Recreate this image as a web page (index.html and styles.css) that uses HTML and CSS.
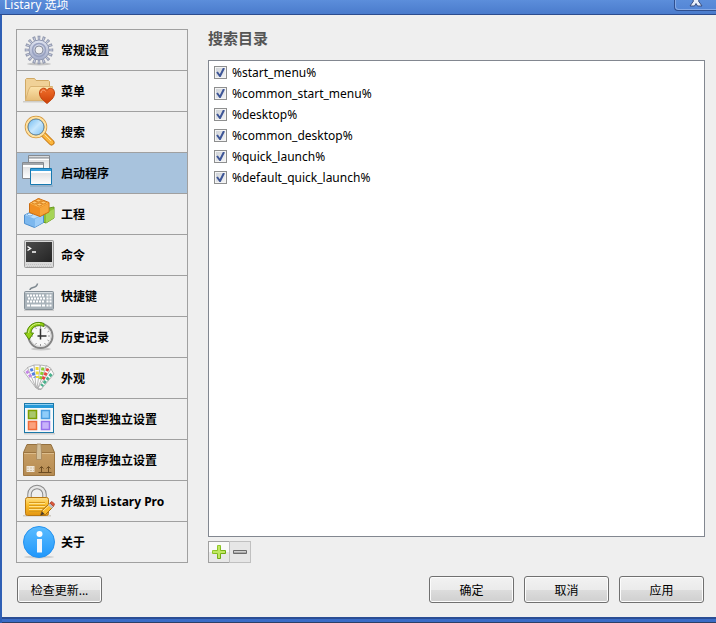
FILE: index.html
```html
<!DOCTYPE html>
<html lang="zh-CN">
<head>
  <meta charset="UTF-8">
  <title>Listary 选项</title>
  <link rel="stylesheet" href="styles.css">
</head>
<body>

  <header class="titlebar">
    <span class="title">Listary 选项</span>
    <button class="close-btn" aria-label="关闭">
      <svg width="14" height="12" viewBox="0 0 14 12">
        <path d="M1 0h4l2 3 2-3h4L9.500 6l3.500 5H8.500L7 8.500 5.500 11H1l3.500-5z" fill="#e8effa" stroke="#3a4f80"/>
      </svg>
    </button>
  </header>

  <main class="window">
    <div class="columns">
      <nav class="sidebar">
        <button class="nav-item">
          <svg class="icon" viewBox="0 0 32 32">
            <defs>
              <linearGradient id="gGear" x1="0" y1="0" x2="0" y2="1"><stop offset="0" stop-color="#dfe3f0"/><stop offset="1" stop-color="#a3acc9"/></linearGradient>
            </defs>
            <ellipse cx="16" cy="30" rx="12" ry="1.500" fill="#c4c4c4"/>
            <circle cx="16" cy="16" r="12" fill="none" stroke="#858ca3" stroke-width="4.500" pathLength="32" stroke-dasharray="1.100 .9" stroke-dashoffset=".55"/>
            <circle cx="16" cy="16" r="11.500" fill="none" stroke="#c3c9dc" stroke-width="4" pathLength="32" stroke-dasharray=".5 1.500" stroke-dashoffset=".25"/>
            <circle cx="16" cy="16" r="10" fill="url(#gGear)" stroke="#8f97b0"/>
            <circle cx="16" cy="16" r="6.500" fill="none" stroke="#98a1c0" stroke-width="1.500"/>
            <circle cx="16" cy="16" r="4" fill="#efefef" stroke="#8a8f9f"/>
          </svg>
          常规设置
        </button>
        <button class="nav-item">
          <svg class="icon" viewBox="0 0 32 32">
            <defs>
              <linearGradient id="gFolder" x1="0" y1="0" x2="0" y2="1"><stop offset="0" stop-color="#fce3ab"/><stop offset="1" stop-color="#e6bd78"/></linearGradient>
              <linearGradient id="gHeart" x1="0" y1="0" x2="0" y2="1"><stop offset="0" stop-color="#f0702c"/><stop offset="1" stop-color="#cc3f06"/></linearGradient>
            </defs>
            <path d="M0 26h24v1.500H0z" fill="#cfcdc8"/>
            <path d="M2.500 25.500v-21l1-1h8l1.500 2h12.500l1 1v19z" fill="#f0d197" stroke="#d0a965"/>
            <path d="M2.500 25.500L5.500 15l2-3.500h22L27 25.500z" fill="url(#gFolder)" stroke="#d9b372"/>
            <path d="M24 28.500c-3-2.500-7.500-5.500-7.500-10.500 0-5 5.500-6.500 7.500-2.500 2-4 7.500-2.500 7.500 2.500 0 5-4.500 8-7.500 10.500z" fill="url(#gHeart)" stroke="#c0420d"/>
            <path d="M18 18c0-3.500 3.500-3.500 4.500-1.500" fill="none" stroke="#f9a87a"/>
          </svg>
          菜单
        </button>
        <button class="nav-item">
          <svg class="icon" viewBox="0 0 32 32">
            <defs>
              <linearGradient id="gLens" x1="0" y1="0" x2="1" y2="1"><stop offset="0" stop-color="#5fb2f0"/><stop offset=".5" stop-color="#c7e7fd"/><stop offset="1" stop-color="#6fbaf2"/></linearGradient>
            </defs>
            <path d="M20 18l8.500 8.500" stroke="#c67a16" stroke-width="6" stroke-linecap="round"/>
            <path d="M20.500 18.500l8 8" stroke="#fbb53c" stroke-width="4" stroke-linecap="round"/>
            <path d="M21 18l7 7" stroke="#fde09a" stroke-width="1"/>
            <circle cx="13" cy="11" r="9.500" fill="url(#gLens)" stroke="#d3973b" stroke-width="3.500"/>
            <circle cx="13" cy="11" r="9.500" fill="none" stroke="#ffe2a3" stroke-width="2"/>
            <circle cx="13" cy="11" r="8" fill="none" stroke="#628eaf"/>
          </svg>
          搜索
        </button>
        <button class="nav-item active">
          <svg class="icon" viewBox="0 0 32 32">
            <defs>
              <linearGradient id="gWin" x1="0" y1="0" x2="0" y2="1"><stop offset="0" stop-color="#d5d7d9"/><stop offset="1" stop-color="#ffffff"/></linearGradient>
            </defs>
            <path d="M5.500-1.500h21v17h-21z" fill="url(#gWin)" stroke="#858a90"/>
            <path d="M6 0h20v1.500H6z" fill="#a3a7ab"/><path d="M6 2h20v1H6z" fill="#fff"/>
            <path d="M-.5 5.500h21v16h-21z" fill="url(#gWin)" stroke="#858a90"/>
            <path d="M0 6h20v2H0z" fill="#a3a7ab"/><path d="M0 8h20v2H0z" fill="#fff"/>
            <path d="M7 28.500h23v1H7z" fill="#83a0b8"/>
            <path d="M7.500 11.500h21v16h-21z" fill="url(#gWin)" stroke="#1779b0"/>
            <path d="M8 12h20v2H8z" fill="#39a0dc"/><path d="M8 14h20v2H8z" fill="#fff"/>
          </svg>
          启动程序
        </button>
        <button class="nav-item">
          <svg class="icon" viewBox="0 0 32 32">
            <path d="M20 13l6-3 5-1v11l-8 5-3-1z" fill="#8abf35" stroke="#6b9a22"/>
            <path d="M23 15l8-4v9l-8 5z" fill="#a6d455"/>
            <path d="M1.500 17l9-4 10 3v8.500l-9 5-10-4z" fill="#7db8ee" stroke="#4e8fce"/>
            <path d="M2 17l9 3.500 9-4-9-3.500z" fill="#bcdefb"/>
            <path d="M12 21l8-4v7.500l-8 4.500z" fill="#9dcdf8"/>
            <ellipse cx="7" cy="16.500" rx="2.500" ry="1.500" fill="#dbeefe" stroke="#6ca9e2"/>
            <path d="M6.500 5.500l9-5 10.500 4v9.500l-9 4.500-10.500-4z" fill="#f08f22" stroke="#cc6d10"/>
            <path d="M7 5.500l9.500 4 9-4.500-9.500-4z" fill="#fcb850"/>
            <path d="M17 10l8.500-4.500v8l-8.500 4.500z" fill="#f6a53b"/>
            <g fill="#ffc66d" stroke="#d87d1a"><ellipse cx="15.500" cy="2.500" rx="2.500" ry="1.500"/><ellipse cx="11.500" cy="4.500" rx="2.500" ry="1.500"/><ellipse cx="20.500" cy="4.500" rx="2.500" ry="1.500"/><ellipse cx="16.500" cy="6.500" rx="2.500" ry="1.500"/></g>
          </svg>
          工程
        </button>
        <button class="nav-item">
          <svg class="icon" viewBox="0 0 32 32">
            <defs>
              <linearGradient id="gTerm" x1="0" y1="0" x2="1" y2="1"><stop offset="0" stop-color="#4c4c4c"/><stop offset="1" stop-color="#242424"/></linearGradient>
            </defs>
            <rect x="1.500" y="1.500" width="29" height="27" rx="1" fill="#d9d9d9" stroke="#9b9b9b"/>
            <rect x="3" y="3" width="26" height="20" fill="url(#gTerm)"/>
            <path d="M4.500 7.500l3 2-3 2M9 13h4" fill="none" stroke="#fff" stroke-width="1.500"/>
            <path d="M3 25.500h26M4 27.500h25" stroke="#c2c2c2" stroke-dasharray="1 1"/>
          </svg>
          命令
        </button>
        <button class="nav-item">
          <svg class="icon" viewBox="0 0 32 32">
            <path d="M7 10c0-4 7-1 7.500-6.500" fill="none" stroke="#7e8890" stroke-width="1.500"/>
            <path d="M1 30h30v1H1z" fill="#cfcfcf"/>
            <rect x="1.500" y="11.500" width="29" height="18" rx="1" fill="#a9b3ba" stroke="#858f97"/>
            <path d="M2.500 12.500h27" stroke="#d8dee2"/>
            <path d="M4 15.500h18M5 18.500h17M4 21.500h18" stroke="#fff" stroke-width="2" stroke-dasharray="2 1"/>
            <path d="M4 25.500h3M8 25.500h10M19 25.500h3" stroke="#fff" stroke-width="2"/>
            <path d="M23.500 15.500h5M23.500 18.500h5M23.500 21.500h5M23.500 25.500h5" stroke="#fff" stroke-width="2" stroke-dasharray="2 1"/>
          </svg>
          快捷键
        </button>
        <button class="nav-item">
          <svg class="icon" viewBox="0 0 32 32">
            <ellipse cx="18" cy="28" rx="10" ry="1.500" fill="#c8c8c8"/>
            <circle cx="17.500" cy="15" r="12" fill="#f7f7f7" stroke="#858585" stroke-width="2"/>
            <circle cx="17.500" cy="15" r="10.500" fill="none" stroke="#d6d6d6"/>
            <path d="M17.500 5v2M17.500 23v2M8 15h2M25 15h2M12.500 6.500l1 1.500M22.500 6.500l-1 1.500M26 10l-1.500 1M26 20l-1.500-1M22.500 23.500l-1-1.500M12.500 23.500l1-1.500" stroke="#9a9a9a"/>
            <path d="M17.500 7.500v11M14.500 15h9" stroke="#333" stroke-width="1.500"/>
            <path d="M21 2.500C13-1 4 4 4 12H1.500L6 18.500 10.500 12H8c0-6 6-9 13-6.500z" fill="#94d015" stroke="#558a0a"/>
            <path d="M17 2.500C10 2 6 6.500 5.500 12" fill="none" stroke="#d4f286"/>
          </svg>
          历史记录
        </button>
        <button class="nav-item">
          <svg class="icon" viewBox="0 0 32 32">
            <g stroke="#a6a6a6" stroke-width=".8" fill="#fbfbfb">
              <path d="M13 26L.8 9.500 5 5.500l12 19z"/>
              <path d="M13 26L4.500 5.500 11 3l6 21z"/>
              <path d="M13 26L11 3h6l1 22z"/>
              <path d="M14 26l3.500-23 6 1-5 22z"/>
              <path d="M15 26l8.500-22.500 4.500 3L18.500 27z"/>
              <path d="M15 26L28 7l3 5-13 15.500z"/>
            </g>
            <g stroke-width="3" fill="none" stroke-dasharray="3 1.500">
              <path d="M3.500 9l4.500 6" stroke="#c487e4"/>
              <path d="M8 6.500l4 9" stroke="#4e7fe0"/>
              <path d="M14 5l.5 11" stroke="#eedb35"/>
              <path d="M20 5.500l-2.500 12" stroke="#8bcb31"/>
              <path d="M25 6.500l-5 11" stroke="#e6483f"/>
              <path d="M28.500 12l-10 12" stroke="#4bb18d"/>
            </g>
            <path d="M11 20l5 7.500 3-2-1 2.500h-3z" fill="#a9a9a9"/>
          </svg>
          外观
        </button>
        <button class="nav-item">
          <svg class="icon" viewBox="0 0 32 32">
            <path d="M1 30h31v1.500H1z" fill="#cccccc"/>
            <rect x="1.500" y=".5" width="29" height="29" fill="#f6f9fb" stroke="#1b78a8"/>
            <path d="M2 1h28v1H2z" fill="#8dcff2"/><path d="M2 2h28v3H2z" fill="#2699d8"/>
            <path d="M5.500 7.500h8v8h-8z" fill="#a9c76b" stroke="#7ea000" stroke-width="1.500"/>
            <path d="M18.500 7.500h8v8h-8z" fill="#8fcdfa" stroke="#4a9ee0" stroke-width="1.500"/>
            <path d="M5.500 18.500h8v8h-8z" fill="#fba27d" stroke="#ef6c3a" stroke-width="1.500"/>
            <path d="M18.500 18.500h8v8h-8z" fill="#c8b2fa" stroke="#9871ec" stroke-width="1.500"/>
          </svg>
          窗口类型独立设置
        </button>
        <button class="nav-item">
          <svg class="icon" viewBox="0 0 32 32">
            <defs>
              <linearGradient id="gBox" x1="0" y1="0" x2="0" y2="1"><stop offset="0" stop-color="#c79d63"/><stop offset="1" stop-color="#b58b52"/></linearGradient>
            </defs>
            <path d="M.5 8.500L4 .5h24l3.500 8z" fill="#b8935d" stroke="#94703e"/>
            <path d="M.5 8.500h31v23H.5z" fill="url(#gBox)" stroke="#9c7541"/>
            <path d="M1 9.500h30" stroke="#dcbc8b"/>
            <path d="M14 0h4l.5 9v6.500h-5V9z" fill="#d3c09c" stroke="#a4875d" stroke-width=".8"/>
            <path d="M3.500 22h8v6h-8z" fill="#efe6d8"/>
            <path d="M4 24h7M4 26.500h7" stroke="#d3c2a6" stroke-dasharray="2 1"/>
            <path d="M18.500 28v-5M16.500 24.500l2-2 2 2M25.500 28v-5M23.500 24.500l2-2 2 2M15.500 28.500h13" fill="none" stroke="#6d4c21"/>
          </svg>
          应用程序独立设置
        </button>
        <button class="nav-item">
          <svg class="icon" viewBox="0 0 32 32">
            <defs>
              <linearGradient id="gLock" x1="0" y1="0" x2="0" y2="1"><stop offset="0" stop-color="#fee08a"/><stop offset=".4" stop-color="#fbc02e"/><stop offset="1" stop-color="#e39510"/></linearGradient>
            </defs>
            <path d="M0 30h28v1.500H0z" fill="#cfcac2"/>
            <path d="M6.500 14V9.500a7.500 7.500 0 0 1 15 0V14" fill="none" stroke="#8a8a8a" stroke-width="4.500"/>
            <path d="M6.500 14V9.500a7.500 7.500 0 0 1 15 0V14" fill="none" stroke="#e6e6e6" stroke-width="2.500"/>
            <rect x="2.500" y="12.500" width="23" height="18" rx="2" fill="url(#gLock)" stroke="#b97813"/>
            <path d="M6 17.500h16M6 20.500h16M6 23.500h16M6 26.500h12" stroke="#d99a1c"/>
            <path d="M6 18.500h16M6 21.500h16M6 24.500h16" stroke="#ffe28d"/>
            <path d="M17.500 30.500l1.500-5 7.500-7 3.500 3.500-7.500 7.500z" fill="#fbbb2b" stroke="#a76a10"/>
            <path d="M20 26l7-6.500" stroke="#ffe492"/>
            <path d="M17.500 30.500l1.500-4 2.500 2.500z" fill="#453a2d"/>
            <path d="M25 20l2-2 3.500 3.500-2 2z" fill="#bfc3c8"/>
            <path d="M27 18l2-1.500 2.500 2.500-1 2.500z" fill="#e0583a" stroke="#a83b24" stroke-width=".8"/>
          </svg>
          升级到 Listary Pro
        </button>
        <button class="nav-item">
          <svg class="icon" viewBox="0 0 32 32">
            <defs>
              <linearGradient id="gInfo" x1="0" y1="0" x2="0" y2="1"><stop offset="0" stop-color="#5bbcff"/><stop offset="1" stop-color="#1f97fb"/></linearGradient>
            </defs>
            <ellipse cx="16" cy="31" rx="15" ry="1.500" fill="#cfcfcf"/>
            <circle cx="16" cy="16" r="15.500" fill="url(#gInfo)" stroke="#2591ee"/>
            <circle cx="16.500" cy="8" r="3" fill="#fff"/>
            <path d="M14 13h5v13.500h-5z" fill="#f2f7fd"/>
          </svg>
          关于
        </button>
      </nav>

      <section class="panel">
        <h1 class="panel-title">搜索目录</h1>
        <ul class="dir-list">
          <li><label class="dir"><input type="checkbox" checked>%start_menu%</label></li>
          <li><label class="dir"><input type="checkbox" checked>%common_start_menu%</label></li>
          <li><label class="dir"><input type="checkbox" checked>%desktop%</label></li>
          <li><label class="dir"><input type="checkbox" checked>%common_desktop%</label></li>
          <li><label class="dir"><input type="checkbox" checked>%quick_launch%</label></li>
          <li><label class="dir"><input type="checkbox" checked>%default_quick_launch%</label></li>
        </ul>
        <div class="tools">
          <button class="tool-btn tool-add" aria-label="添加">
            <svg width="16" height="16" viewBox="0 0 16 16">
              <defs>
                <linearGradient id="gPlus" x1="0" y1="0" x2="1" y2="1"><stop offset="0" stop-color="#a4d638"/><stop offset="1" stop-color="#5c9c00"/></linearGradient>
              </defs>
              <path d="M6.500 1.500h3v5h5v3h-5v5h-3v-5h-5v-3h5z" fill="#bfe860" stroke="url(#gPlus)"/>
            </svg>
          </button>
          <button class="tool-btn tool-remove" aria-label="删除">
            <svg width="16" height="16" viewBox="0 0 16 16">
              <path d="M1.500 6.500h13v3h-13z" fill="#a9a9a9" stroke="#6b6b6b"/>
              <path d="M2 7.500h12" stroke="#cfcfcf"/>
            </svg>
          </button>
        </div>
      </section>
    </div>

    <footer class="actions">
      <button class="btn btn-update">检查更新...</button>
      <button class="btn">确定</button>
      <button class="btn">取消</button>
      <button class="btn">应用</button>
    </footer>
  </main>

</body>
</html>
```

FILE: styles.css
```css
* {
  box-sizing: border-box;
}
body {
  margin: 0;
  min-height: 100vh;
  display: flex;
  flex-direction: column;
  background: #efefef;
  color: #000;
  font-family: "Noto Sans", "Noto Sans CJK SC", sans-serif;
  font-size: 12px;
}
button {
  font: inherit;
  color: inherit;
  padding: 0;
  margin: 0;
}
.titlebar {
  display: flex;
  justify-content: space-between;
  height: 15px;
  padding-left: 4px;
  overflow: hidden;
  background: linear-gradient(#5c8edb, #4a7bcc);
  border-bottom: 1px solid #2c4c8e;
  color: #fff;
}
.title {
  line-height: 10px;
}
.close-btn {
  display: flex;
  justify-content: center;
  align-items: flex-end;
  width: 42px;
  height: 11px;
  padding-bottom: 3px;
  background: linear-gradient(#5c8edb, #5486d6);
  border: 1px solid #2f4f8f;
  border-width: 0 0 1px 1px;
  border-radius: 0 0 0 4px;
  box-shadow: inset 1px -1px 0 #86aae6;
}
.window {
  flex: 1;
  display: flex;
  flex-direction: column;
  padding: 14px 11px 14px 14px;
  border-left: 2px solid #2f5fb5;
  box-shadow: inset 0 -1px 0 #2b3f66, inset 0 -4px 0 #3a6cc6, inset 0 -6px 0 #2a4d94;
  padding-bottom: 20px;
}
.columns {
  flex: 1;
  display: grid;
  grid-template-columns: 172px 1fr;
  gap: 20px;
}
.sidebar {
  align-self: start;
  border: 1px solid #a0a0a0;
}
.nav-item {
  display: flex;
  align-items: center;
  gap: 6px;
  width: 100%;
  height: 41px;
  padding-left: 6px;
  background: none;
  border: none;
  border-bottom: 1px solid #a0a0a0;
  font-weight: bold;
  text-align: left;
}
.nav-item:last-child {
  height: 40px;
  border-bottom: none;
}
.nav-item.active {
  background: #a8c3dd;
}
.icon {
  flex: none;
  width: 32px;
  height: 32px;
  overflow: visible;
}
.panel {
  display: flex;
  flex-direction: column;
}
.panel-title {
  margin: 0;
  height: 31px;
  line-height: 18px;
  font-size: 15px;
  font-weight: bold;
  color: #555;
}
.dir-list {
  flex: 1;
  margin: 0;
  padding: 1px 5px;
  list-style: none;
  background: #fff;
  border: 1px solid #828790;
}
.dir {
  display: flex;
  align-items: center;
  gap: 5px;
  height: 21px;
}
.dir input {
  appearance: none;
  width: 13px;
  height: 13px;
  margin: 0;
  border: 1px solid #8e8f8f;
  background: linear-gradient(135deg, #cbcfd5, #f6f6f6);
  box-shadow: inset 0 0 0 1px #f4f4f4;
}
.dir input:checked {
  background-image: url("data:image/svg+xml,%3Csvg xmlns='http://www.w3.org/2000/svg' viewBox='0 0 11 11'%3E%3Cpath d='M2 5l3 4L9 1' fill='none' stroke='%233d5596' stroke-width='2'/%3E%3C/svg%3E"), linear-gradient(135deg, #cbcfd5, #f6f6f6);
}
.tools {
  display: flex;
  margin-top: 4px;
}
.tool-btn {
  display: flex;
  align-items: center;
  justify-content: center;
  width: 22px;
  height: 22px;
  border: 1px solid #c0c0c0;
  background: #e6e6e6;
}
.tool-add {
  width: 21px;
  border-color: #a0a0a0;
  border-right: none;
  background: linear-gradient(#fafafa 50%, #e8e8e8 50%);
}
.actions {
  display: flex;
  gap: 10px;
  margin-top: 13px;
  padding: 0 1px;
}
.btn {
  width: 85px;
  height: 27px;
  border: 1px solid #707070;
  border-radius: 3px;
  background: linear-gradient(#f2f2f2, #ebebeb 50%, #dddddd 50%, #cfcfcf);
  box-shadow: inset 0 0 0 1px #fcfcfc;
}
.btn-update {
  margin-right: auto;
}
```
